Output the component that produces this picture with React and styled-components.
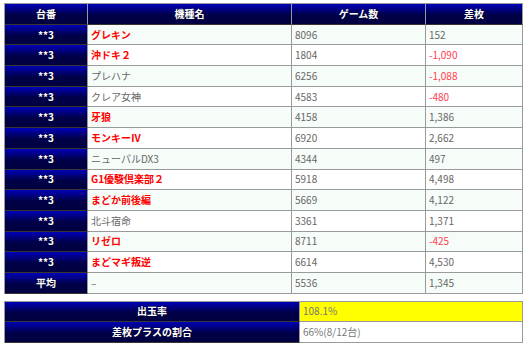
import React from 'react';
import styled, { createGlobalStyle } from 'styled-components';

const rows = [
  { no: '**3', name: 'グレキン', hot: true, games: 8096, diff: '152' },
  { no: '**3', name: '沖ドキ２', hot: true, games: 1804, diff: '-1,090' },
  { no: '**3', name: 'プレハナ', hot: false, games: 6256, diff: '-1,088' },
  { no: '**3', name: 'クレア女神', hot: false, games: 4583, diff: '-480' },
  { no: '**3', name: '牙狼', hot: true, games: 4158, diff: '1,386' },
  { no: '**3', name: 'モンキーⅣ', hot: true, games: 6920, diff: '2,662' },
  { no: '**3', name: 'ニューパルDX3', hot: false, games: 4344, diff: '497' },
  { no: '**3', name: 'G1優駿倶楽部２', hot: true, games: 5918, diff: '4,498' },
  { no: '**3', name: 'まどか前後編', hot: true, games: 5669, diff: '4,122' },
  { no: '**3', name: '北斗宿命', hot: false, games: 3361, diff: '1,371' },
  { no: '**3', name: 'リゼロ', hot: true, games: 8711, diff: '-425' },
  { no: '**3', name: 'まどマギ叛逆', hot: true, games: 6614, diff: '4,530' },
];

const GlobalStyle = createGlobalStyle`
  body {
    margin: 0;
    background: #ffffff;
    font-family: "Noto Sans CJK JP", "DejaVu Sans", sans-serif;
  }
`;

const Page = styled.div`
  padding: 3px 4px 0 4px;
  width: 518px;
`;

const Table = styled.table`
  width: 518px;
  table-layout: fixed;
  border-collapse: separate;
  border-spacing: 0;
  border-top: 1px solid #9a9a9a;
  border-left: 1px solid #9a9a9a;
  margin-bottom: ${(p) => p.$gap || 0}px;
`;

const Row = styled.tr`
  height: 20.7px;
`;

const Head = styled.th`
  padding: 0;
  height: 19.7px;
  background: linear-gradient(to bottom, #0000b8 0%, #00007a 30%, #000048 55%, #000040 100%);
  color: #ffffff;
  font-size: 10px;
  font-weight: bold;
  text-align: center;
  text-shadow: 0 0 1px #000;
  border-right: 1px solid ${(p) => (p.$dark ? '#9a9a9a' : '#9a9a9a')};
  border-bottom: 1px solid #3a3430;
  line-height: 1;
`;

const Cell = styled.td`
  padding: 0 0 0 3px;
  height: 19.7px;
  background: ${(p) => (p.$tint ? '#f6fdf8' : '#ffffff')};
  color: ${(p) => (p.$red ? '#ff0000' : p.$neg ? '#ff3c50' : '#666666')};
  font-size: 10px;
  font-weight: ${(p) => (p.$red ? 'bold' : 'normal')};
  border-right: 1px solid #9a9a9a;
  border-bottom: 1px solid #9a9a9a;
  white-space: nowrap;
  line-height: 1;
`;

const Rate = styled(Cell)`
  background: ${(p) => (p.$yellow ? '#ffff00' : '#ffffff')};
  color: #777777;
`;

export default function App() {
  return (
    <Page>
      <GlobalStyle />
      <Table $gap={7}>
        <colgroup>
          <col style={{ width: 83 }} />
          <col style={{ width: 204 }} />
          <col style={{ width: 134 }} />
          <col style={{ width: 97 }} />
        </colgroup>
        <thead>
          <Row>
            <Head>台番</Head>
            <Head>機種名</Head>
            <Head>ゲーム数</Head>
            <Head>差枚</Head>
          </Row>
        </thead>
        <tbody>
          {rows.map((r, i) => (
            <Row key={i}>
              <Head>{r.no}</Head>
              <Cell $tint={i % 2 === 0} $red={r.hot}>{r.name}</Cell>
              <Cell $tint={i % 2 === 0}>{r.games}</Cell>
              <Cell $tint={i % 2 === 0} $neg={r.diff.startsWith('-')}>{r.diff}</Cell>
            </Row>
          ))}
          <Row>
            <Head>平均</Head>
            <Cell $tint>–</Cell>
            <Cell $tint>5536</Cell>
            <Cell $tint>1,345</Cell>
          </Row>
        </tbody>
      </Table>
      <Table>
        <colgroup>
          <col style={{ width: 295 }} />
          <col style={{ width: 223 }} />
        </colgroup>
        <tbody>
          <Row>
            <Head>出玉率</Head>
            <Rate $yellow>108.1%</Rate>
          </Row>
          <Row>
            <Head>差枚プラスの割合</Head>
            <Rate>66%(8/12台)</Rate>
          </Row>
        </tbody>
      </Table>
    </Page>
  );
}
